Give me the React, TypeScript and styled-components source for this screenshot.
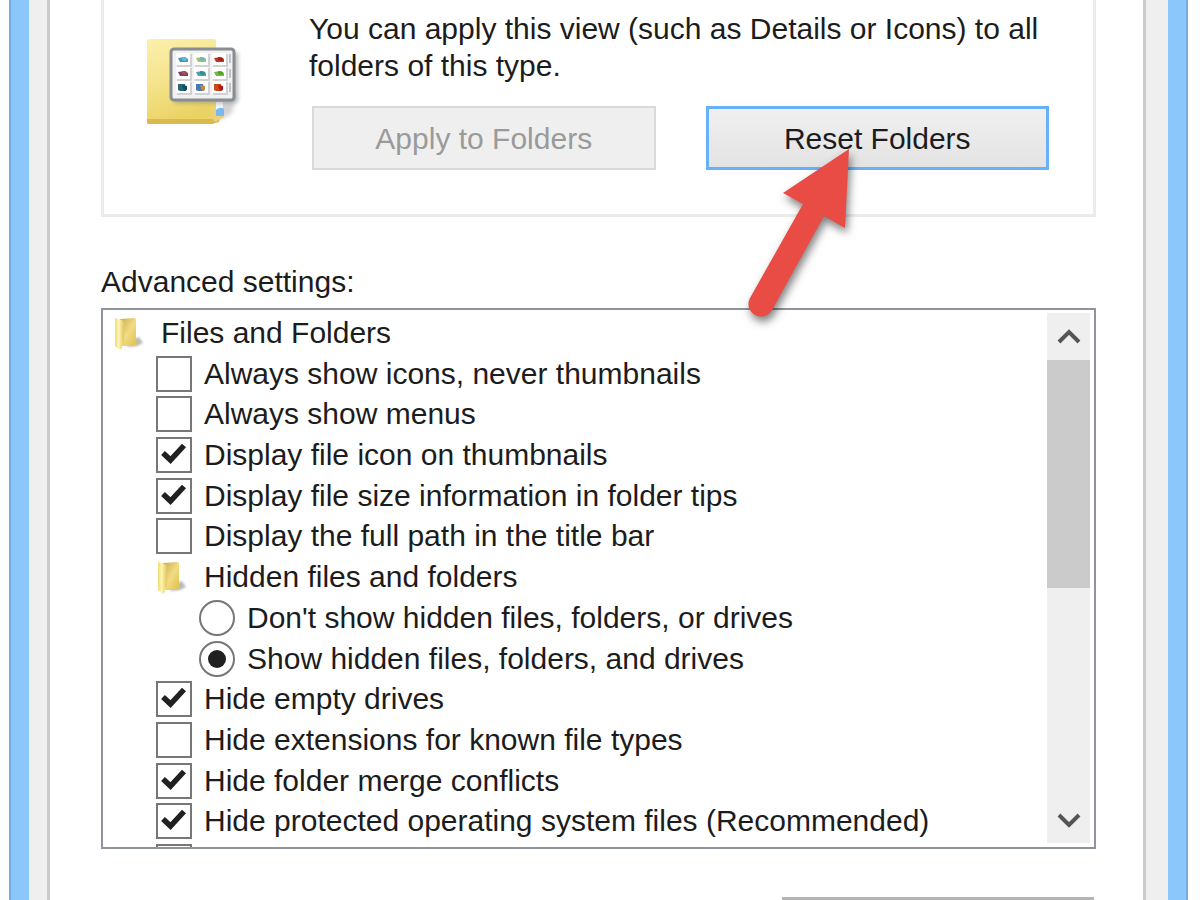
import React, { useState } from "react";
import styled, { createGlobalStyle } from "styled-components";

const GlobalStyle = createGlobalStyle`
  *, *::before, *::after { box-sizing: border-box; }
  html, body { margin: 0; background: #fff; }
  body, button, input {
    font-family: "Liberation Sans", Arial, sans-serif;
    font-size: 30px;
    color: #1c1c1c;
  }
`;

const Desktop = styled.div`
  height: 100vh;
  overflow: hidden;
  padding: 0 12px 0 9px;
  background: #fdfdfd;
`;

const WindowFrame = styled.div`
  display: flex;
  min-height: 100%;
  padding: 0 18px;
  background: #8cc7fb;
  border: solid #75abdd;
  border-width: 0 2px;
`;

const DialogSurface = styled.div`
  flex: 1;
  display: flex;
  padding: 0 22px 0 18px;
  background: #efefef;
`;

const TabPage = styled.main`
  flex: 1;
  min-width: 0;
  padding: 0 47px 0 51px;
  background: #fff;
  border: solid #cacaca;
  border-width: 0 3px;
`;

const FolderViews = styled.section`
  display: flex;
  gap: 67px;
  height: 217px;
  padding: 10px 44px 0 42px;
  border: 3px solid #ebebeb;
  border-top: 0;
`;

const FolderPicture = styled.svg`
  flex: none;
  width: 96px;
  height: 92px;
  margin-top: 25px;
`;

const ViewsContent = styled.div`
  flex: 1;
`;

const Description = styled.p`
  margin: 0;
  line-height: 37px;
`;

const ButtonRow = styled.div`
  display: grid;
  grid-template-columns: 1fr 1fr;
  gap: 50px;
  margin: 22px 0 0 3px;
`;

const ButtonCell = styled.div`
  position: relative;
`;

const PushButton = styled.button<{ $focused?: boolean }>`
  display: block;
  width: 100%;
  height: 64px;
  padding: 2px 0 0;
  border: ${(p) => (p.$focused ? "3px solid #67b0fa" : "2px solid #d9d9d9")};
  background: ${(p) => (p.$focused ? "linear-gradient(#f0f0f0, #e3e3e3)" : "#efefef")};
  &:disabled { color: #9a9a9a; }
`;

const Pointer = styled.svg`
  position: absolute;
  left: 25px;
  top: 34px;
  width: 140px;
  height: 200px;
  z-index: 2;
  pointer-events: none;
  filter: drop-shadow(2px 5px 4px rgba(0, 0, 0, 0.5));
`;

const ListHeading = styled.h2`
  margin: 47px 0 9px;
  font-size: 30px;
  font-weight: 400;
  line-height: 35px;
`;

const ListBox = styled.div`
  display: flex;
  height: 541px;
  padding: 3px 4px 4px 8px;
  overflow: hidden;
  border: 2px solid #8f939d;
`;

const Tree = styled.ul`
  flex: 1;
  display: grid;
  grid-template-rows: repeat(13, minmax(0, 1fr)) 0;
  margin: 0;
  padding: 0;
  height: 529px;
  list-style: none;
`;

const Row = styled.li<{ $level: number }>`
  display: flex;
  align-items: center;
  height: 40px;
  padding-left: ${(p) => p.$level * 43}px;
  white-space: nowrap;
`;

const RowLabel = styled.label`
  display: flex;
  align-items: center;
  gap: 12px;
`;

const GroupLabel = styled.span`
  display: flex;
  align-items: center;
  gap: 16px;
`;

const SmallFolder = styled.svg`
  flex: none;
  width: 34px;
  height: 36px;
`;

const Mark = styled.input`
  appearance: none;
  flex: none;
  display: grid;
  place-items: center;
  width: 36px;
  height: 36px;
  margin: 0 0 0 2px;
  border: 2px solid #777;
  background: #fff;
`;

const CheckBox = styled(Mark)`
  &:checked {
    background: #fff url("data:image/svg+xml,%3Csvg xmlns='http://www.w3.org/2000/svg' viewBox='0 0 32 32'%3E%3Cpath d='M5 14l7.500 7L26 6.500' fill='none' stroke='%23202020' stroke-width='5.500'/%3E%3C/svg%3E") center / 32px no-repeat;
  }
`;

const Radio = styled(Mark)`
  border-radius: 50%;
  &:checked::before {
    content: "";
    width: 18px;
    height: 18px;
    border-radius: 50%;
    background: #202020;
  }
`;

const ScrollBar = styled.div`
  flex: none;
  display: flex;
  flex-direction: column;
  width: 43px;
  background: #efefef;
`;

const ScrollButton = styled.button`
  flex: none;
  display: grid;
  place-items: center;
  height: 47px;
  padding: 0;
  border: 0;
  background: transparent;
`;

const ScrollTrack = styled.div`
  flex: 1;
`;

const ScrollThumb = styled.div`
  height: 228px;
  background: #cbcbcb;
`;

const Footer = styled.div`
  display: flex;
  justify-content: flex-end;
  padding: 48px 2px 0 0;
`;

const FooterButton = styled.button`
  width: 312px;
  height: 64px;
  border: 3px solid #b4b4b4;
  background: #e8e8e8;
`;

function LargeFolderIcon() {
  const cells = [
    ["#3c9db5", "#a5bf62", "#b63a25"],
    ["#66466f", "#4ba4ad", "#74b743"],
    ["#23677a", "#4879b4", "#c84a1c"],
  ];
  const accents = [
    ["#6db6d8", "#68b6c4", "#a51d20"],
    ["#b74a42", "#2e8c9c", "#4f9f2c"],
    ["#174b62", "#c38a44", "#a81e17"],
  ];
  return (
    <FolderPicture viewBox="0 0 96 92" aria-hidden="true">
      <defs>
        <linearGradient id="folderFace" x1="0" y1="0" x2="0.3" y2="1">
          <stop offset="0" stopColor="#fbf0ad" />
          <stop offset="0.5" stopColor="#f5e48e" />
          <stop offset="1" stopColor="#ead263" />
        </linearGradient>
        <filter id="folderShade" x="-20%" y="-20%" width="150%" height="150%">
          <feGaussianBlur stdDeviation="2" />
        </filter>
      </defs>
      <path d="M70 60h20l-4 18-10 6H66z" fill="#b5b5b5" opacity="0.6" filter="url(#folderShade)" />
      <path d="M1 5q0-1 1-1h66q2 0 2 2v74l-3 9H3q-2 0-2-2z" fill="url(#folderFace)" />
      <path d="M1 84h66l2-3 5 1-1 5-7 2H3q-2 0-2-2z" fill="#dcb850" />
      <path d="M65 63h13v19l-9 5-4-5z" fill="#ead27a" />
      <path d="M70 67h7v8h-7z" fill="#f3f5f8" />
      <path d="M70 75q4-4 8-1v7h-8z" fill="#79b8ec" />
      <rect x="28" y="17" width="64" height="51" rx="3" fill="#777" opacity="0.5" filter="url(#folderShade)" />
      <rect x="25" y="14" width="63" height="51" rx="3" fill="#f1f1f1" stroke="#888d94" strokeWidth="3" />
      {cells.map((row, r) =>
        row.map((color, c) => (
          <g key={`${r}${c}`} transform={`translate(${30 + c * 18} ${18 + r * 14})`}>
            <rect x="1" y="1" width="15" height="13" fill="#d2d2d2" />
            <rect width="14" height="12" fill="#fff" />
            <path d={r === 2 ? "M2 3h7l1 7H4L2 9z" : "M2 5l7-1 3 2v3H4z"} fill={color} />
            <path d={r === 2 ? "M6 4l5 1v4l-3 1z" : "M6 4l5 1-1 3-4-1z"} fill={accents[r][c]} />
          </g>
        ))
      )}
      <path d="M84 19v9M84 34v9M84 48v9" stroke="#c4c4c4" strokeWidth="2" />
    </FolderPicture>
  );
}

function SmallFolderIcon() {
  return (
    <SmallFolder viewBox="0 0 34 36" aria-hidden="true">
      <defs>
        <linearGradient id="flap" x1="0" x2="1">
          <stop offset="0" stopColor="#efd96f" />
          <stop offset="0.4" stopColor="#fff5b5" />
          <stop offset="1" stopColor="#e3c65c" />
        </linearGradient>
        <linearGradient id="back" x1="0" x2="1" y2="1">
          <stop offset="0" stopColor="#c9a850" />
          <stop offset="0.5" stopColor="#f1dc85" />
          <stop offset="1" stopColor="#dfbf45" />
        </linearGradient>
        <filter id="smallShade" x="-30%" y="-30%" width="160%" height="160%">
          <feGaussianBlur stdDeviation="1" />
        </filter>
      </defs>
      <path d="M20 25l8-3 4 6-6 3-10 1z" fill="#a9a9a9" opacity="0.8" filter="url(#smallShade)" />
      <path d="M9 4l14-1q2 0 2 2v20l1 3-3 3H10z" fill="url(#back)" />
      <path d="M4 3l7 2q2 1 2 3v19l-2 2v4l-2 2-5-4z" fill="url(#flap)" />
    </SmallFolder>
  );
}

function Chevron({ down }: { down?: boolean }) {
  return (
    <svg width="24" height="18" viewBox="0 0 24 18" aria-hidden="true">
      <path
        d={down ? "M2 4l10 10L22 4" : "M2 14L12 4l10 10"}
        fill="none"
        stroke="#555"
        strokeWidth="4"
      />
    </svg>
  );
}

type Item = { kind: "group" | "check" | "radio"; text: string; level: number; on?: boolean };

const items: Item[] = [
  { kind: "group", text: "Files and Folders", level: 0 },
  { kind: "check", text: "Always show icons, never thumbnails", level: 1 },
  { kind: "check", text: "Always show menus", level: 1 },
  { kind: "check", text: "Display file icon on thumbnails", level: 1, on: true },
  { kind: "check", text: "Display file size information in folder tips", level: 1, on: true },
  { kind: "check", text: "Display the full path in the title bar", level: 1 },
  { kind: "group", text: "Hidden files and folders", level: 1 },
  { kind: "radio", text: "Don't show hidden files, folders, or drives", level: 2 },
  { kind: "radio", text: "Show hidden files, folders, and drives", level: 2, on: true },
  { kind: "check", text: "Hide empty drives", level: 1, on: true },
  { kind: "check", text: "Hide extensions for known file types", level: 1 },
  { kind: "check", text: "Hide folder merge conflicts", level: 1, on: true },
  { kind: "check", text: "Hide protected operating system files (Recommended)", level: 1, on: true },
  { kind: "check", text: "", level: 1 },
];

function TreeItem({ item, on, onToggle }: { item: Item; on: boolean; onToggle: () => void }) {
  if (item.kind === "group") {
    return (
      <Row $level={item.level}>
        <GroupLabel>
          <SmallFolderIcon />
          {item.text}
        </GroupLabel>
      </Row>
    );
  }
  return (
    <Row $level={item.level}>
      <RowLabel>
        {item.kind === "check" ? (
          <CheckBox type="checkbox" checked={on} onChange={onToggle} />
        ) : (
          <Radio type="radio" name="hidden-files" checked={on} onChange={onToggle} />
        )}
        {item.text}
      </RowLabel>
    </Row>
  );
}

export default function App() {
  const [state, setState] = useState(items.map((i) => !!i.on));
  const toggle = (index: number) =>
    setState((prev) =>
      prev.map((v, i) => {
        if (items[index].kind === "radio") return items[i].kind === "radio" ? i === index : v;
        return i === index ? !v : v;
      })
    );

  return (
    <>
      <GlobalStyle />
      <Desktop>
        <WindowFrame>
          <DialogSurface>
            <TabPage>
              <FolderViews>
                <LargeFolderIcon />
                <ViewsContent>
                  <Description>
                    You can apply this view (such as Details or Icons) to all folders of this type.
                  </Description>
                  <ButtonRow>
                    <ButtonCell>
                      <PushButton type="button" disabled>Apply to Folders</PushButton>
                    </ButtonCell>
                    <ButtonCell>
                      <PushButton type="button" $focused>Reset Folders</PushButton>
                      <Pointer viewBox="730 140 140 200" aria-hidden="true">
                        <path
                          d="M848 149L844 228L823 216L771 310A12.500 12.500 0 0 1 749 298L802 204L782 193Z"
                          fill="#e94b45"
                        />
                      </Pointer>
                    </ButtonCell>
                  </ButtonRow>
                </ViewsContent>
              </FolderViews>
              <ListHeading>Advanced settings:</ListHeading>
              <ListBox>
                <Tree>
                  {items.map((item, i) => (
                    <TreeItem key={i} item={item} on={state[i]} onToggle={() => toggle(i)} />
                  ))}
                </Tree>
                <ScrollBar>
                  <ScrollButton type="button" aria-label="Scroll up"><Chevron /></ScrollButton>
                  <ScrollTrack><ScrollThumb /></ScrollTrack>
                  <ScrollButton type="button" aria-label="Scroll down"><Chevron down /></ScrollButton>
                </ScrollBar>
              </ListBox>
              <Footer>
                <FooterButton type="button" aria-label="Restore Defaults" />
              </Footer>
            </TabPage>
          </DialogSurface>
        </WindowFrame>
      </Desktop>
    </>
  );
}
